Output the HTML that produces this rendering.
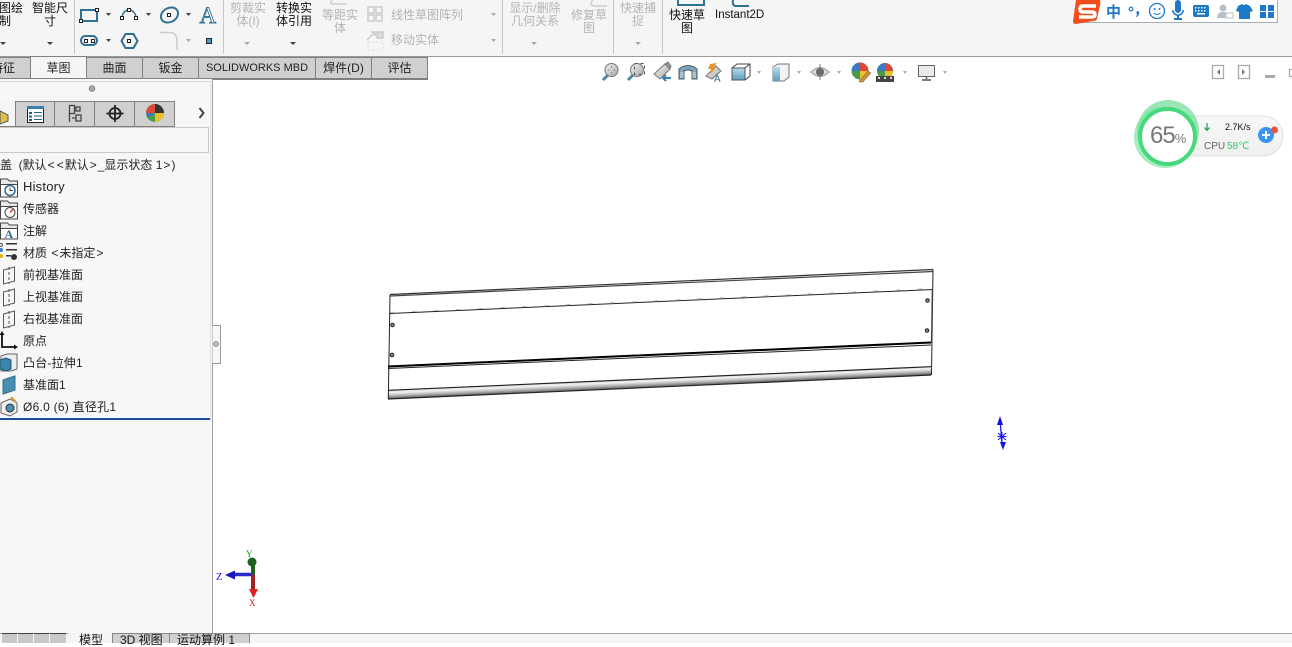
<!DOCTYPE html>
<html><head><meta charset="utf-8"><style>
html,body{margin:0;padding:0;width:1292px;height:643px;overflow:hidden;background:#fff;font-family:"Liberation Sans","Noto Sans CJK SC",sans-serif}
.t{position:absolute;white-space:nowrap;font-size:12px;line-height:13px;color:#111}
.c{text-align:center}
.g{color:#b4b4b4}
.b{position:absolute;background:#f5f5f5;box-sizing:border-box}
.tab{position:absolute;top:57px;height:21px;background:#d0d0d0;border:1px solid #808080;border-left:0;font-size:12px;line-height:21px;text-align:center;color:#222;white-space:nowrap;box-sizing:content-box}
.tr{position:absolute;left:23px;font-size:12px;line-height:16px;color:#222;white-space:nowrap}
.w{padding:0 1px}
svg{position:absolute;left:0;top:0}
</style></head><body>
<div class="b" style="left:0;top:0;width:1292px;height:56px"></div>
<div class="b" style="left:0;top:56px;width:1292px;height:1px;background:#9a9a9a"></div>

<div class="t c" style="left:-13px;top:2px;width:36px">草图绘<br>制</div>
<div class="t c" style="left:30px;top:2px;width:40px">智能尺<br>寸</div>
<div class="t c g" style="left:228px;top:2px;width:40px">剪裁实<br>体(I)</div>
<div class="t c" style="left:274px;top:2px;width:40px">转换实<br>体引用</div>
<div class="t c g" style="left:320px;top:9px;width:40px">等距实<br>体</div>
<div class="t g" style="left:391px;top:9px">线性草图阵列</div>
<div class="t g" style="left:391px;top:34px">移动实体</div>
<div class="t c g" style="left:506px;top:2px;width:58px">显示/删除<br>几何关系</div>
<div class="t c g" style="left:569px;top:9px;width:40px">修复草<br>图</div>
<div class="t c g" style="left:618px;top:2px;width:40px">快速捕<br>捉</div>
<div class="t c" style="left:667px;top:9px;width:40px">快速草<br>图</div>
<div class="t" style="left:715px;top:9px;font-size:11.5px">Instant2D</div>

<div class="tab" style="left:-24px;width:54px;border-left:0;background:#d0d0d0">特征</div>
<div class="tab" style="width:55px;background:#f5f5f5;border-left:1px solid #808080;left:30px;top:56px;height:22px;line-height:23px">草图</div>
<div class="tab" style="left:87px;width:55px">曲面</div>
<div class="tab" style="left:143px;width:55px">钣金</div>
<div class="tab" style="left:199px;width:116px;font-size:11px">SOLIDWORKS MBD</div>
<div class="tab" style="left:316px;width:55px">焊件(D)</div>
<div class="tab" style="left:372px;width:55px">评估</div>

<div class="b" style="left:0;top:79px;width:212px;height:554px;background:#f7f7f7"></div>
<div class="b" style="left:212px;top:79px;width:1px;height:554px;background:#a0a0a0"></div>
<div class="b" style="left:0;top:78px;width:428px;height:1px;background:#808080"></div>
<div class="b" style="left:0;top:81px;width:210px;height:1px;background:#d8d8d8"></div>
<div class="b" style="left:210px;top:81px;width:1px;height:340px;background:#e0e0e0"></div>
<div class="b" style="left:0;top:127px;width:209px;height:26px;background:#f7f7f7;border:1px solid #c8c8c8;border-left:0"></div>
<div class="b" style="left:0;top:101px;width:15px;height:26px;background:#f5f5f5;border-bottom:1px solid #808080"></div>
<div class="b" style="left:15px;top:101px;width:40px;height:26px;background:#d0d0d0;border:1px solid #808080"></div>
<div class="b" style="left:54px;top:101px;width:41px;height:26px;background:#d0d0d0;border:1px solid #808080"></div>
<div class="b" style="left:94px;top:101px;width:41px;height:26px;background:#d0d0d0;border:1px solid #808080"></div>
<div class="b" style="left:134px;top:101px;width:41px;height:26px;background:#d0d0d0;border:1px solid #808080"></div>
<div class="b" style="left:0;top:418px;width:210px;height:2px;background:#1a4f9c"></div>

<div class="tr" style="left:0;top:157px">盖&nbsp;&nbsp;(默认<span class="w">&lt;</span><span class="w">&lt;</span>默认<span class="w">&gt;</span>_显示状态 1<span class="w">&gt;</span>)</div>
<div class="tr" style="top:179px;font-size:13px;letter-spacing:.2px">History</div>
<div class="tr" style="top:201px">传感器</div>
<div class="tr" style="top:223px">注解</div>
<div class="tr" style="top:245px">材质 <span class="w">&lt;</span>未指定<span class="w">&gt;</span></div>
<div class="tr" style="top:267px">前视基准面</div>
<div class="tr" style="top:289px">上视基准面</div>
<div class="tr" style="top:311px">右视基准面</div>
<div class="tr" style="top:333px">原点</div>
<div class="tr" style="top:355px;letter-spacing:.2px">凸台-拉伸1</div>
<div class="tr" style="top:377px">基准面1</div>
<div class="tr" style="top:399px;letter-spacing:.25px">Ø6.0 (6) 直径孔1</div>

<svg width="1292" height="643" viewBox="0 0 1292 643">
<defs>
<linearGradient id="gr" gradientUnits="userSpaceOnUse" x1="660" y1="378" x2="660.4" y2="387"><stop offset="0" stop-color="#d0d0d0"/><stop offset=".3" stop-color="#f2f2f2"/><stop offset=".65" stop-color="#b0b0b0"/><stop offset="1" stop-color="#5a5a5a"/></linearGradient>
<linearGradient id="bl" x1="0" y1="0" x2="0" y2="1"><stop offset="0" stop-color="#b8dcec"/><stop offset="1" stop-color="#5c9dc0"/></linearGradient>
<linearGradient id="gy" x1="0" y1="0" x2="1" y2="1"><stop offset="0" stop-color="#f4f4f4"/><stop offset="1" stop-color="#a8a8a8"/></linearGradient>
<linearGradient id="pill" x1="0" y1="0" x2="0" y2="1"><stop offset="0" stop-color="#f8f8f8"/><stop offset="1" stop-color="#efefef"/></linearGradient>
</defs>
<g fill="none" stroke="#c8c8c8"><path d="M74.500 0V54M223.500 0V54M502.500 0V54M613.500 0V54M662.500 0V54"/></g>
<!-- ribbon arrows -->
<g fill="#444"><path d="M0 42h6l-3 3zM47 42h6l-3 3zM106 13h5l-2.500 3zM146 13h5l-2.500 3zM186 13h5l-2.500 3zM106 39h5l-2.500 3zM290 42h6l-3 3z"/></g>
<g fill="#aaa"><path d="M186 39h5l-2.500 3zM244 42h6l-3 3zM491 13h5l-2.500 3zM491 39h5l-2.500 3zM531 42h6l-3 3zM635 42h6l-3 3zM757 71h4l-2 3zM797 71h4l-2 3zM837 71h4l-2 3zM903 71h4l-2 3zM943 71h4l-2 3z"/></g>
<!-- sketch icons -->
<g fill="none" stroke="#2f7194" stroke-width="2">
<rect x="81" y="10" width="16" height="11"/><path d="M122 18a7 8 0 0 1 14 0" stroke-width="1.500"/>
<ellipse cx="169.500" cy="15" rx="9" ry="7" transform="rotate(-30 169.500 15)"/><rect x="81" y="36" width="16" height="9" rx="4.500"/><path d="M121.500 41l4-7h8l4 7-4 7h-8z"/>
</g>
<g fill="#fff" stroke="#222"><rect x="79.500" y="19.500" width="3" height="3"/><rect x="95.500" y="8.500" width="3" height="3"/><rect x="120.500" y="16.500" width="3" height="3"/><rect x="127.500" y="8.500" width="3" height="3"/><rect x="134.500" y="16.500" width="3" height="3"/><rect x="167.500" y="13.500" width="3" height="3"/><rect x="84.500" y="39.500" width="3" height="3"/><rect x="91.500" y="39.500" width="3" height="3"/><rect x="127.500" y="39.500" width="3" height="3"/></g>
<text x="199.500" y="23" font-family="Liberation Serif" font-size="23" fill="#fff" stroke="#2f7194" stroke-width=".9">A</text>
<rect x="206.500" y="38.500" width="5" height="5" fill="#4f97c0" stroke="#223"/>
<path d="M160 32.500h9q8 0 8 8V50" fill="none" stroke="#ccc" stroke-width="1.500"/>
<g fill="none" stroke="#ccc" stroke-width="1.500"><path d="M368 7h6v6h-6zM376 7h6v6h-6zM368 15h6v6h-6zM376 15h6v6h-6zM367 40l8-8M371 32h4v4"/><rect x="377" y="32" width="6" height="6" fill="#ddd"/><path d="M332 0q-3 4 1 4h14M593 0q-5 5 2 6h12"/></g>
<path d="M368 42h15v8h-15z" fill="none" stroke="#ddd" stroke-dasharray="2 2"/>
<path d="M678 0v5h26V0" fill="none" stroke="#2f7194" stroke-width="2"/><path d="M733 0q-1 6 3 6h13" fill="none" stroke="#2f7194" stroke-width="2"/>
<!-- heads-up -->
<g fill="none" stroke="#4d87a8" stroke-width="3"><path d="M603 80l5-5M628 80l5-5"/></g>
<g fill="url(#gy)" stroke="#777"><circle cx="611.500" cy="70" r="6.500"/><circle cx="637" cy="70" r="6.500"/></g>
<path d="M611.500 66v8M607.500 70h8" stroke="#888" stroke-dasharray="2 4"/>
<rect x="634.500" y="63.500" width="10" height="11" fill="none" stroke="#555" stroke-dasharray="3 3"/>
<path d="M654 74l11-10 5 5-10 10z" fill="url(#gy)" stroke="#777"/><path d="M665 64l3-2 3 4-1 3z" fill="#999" stroke="#777"/><path d="M671 78h-8m3-3l-3 3 3 3" fill="none" stroke="#3a7eb0" stroke-width="2"/>
<path d="M679 79v-10q9-7 18 0v10h-5v-8q-4-2-8 0v8z" fill="#7aa8c2" stroke="#555"/><path d="M681 72v6M683 72v6M693 72v6M695 72v6" stroke="#cfe2ec"/>
<path d="M706 76l10-10 5 5-9 8z" fill="url(#gy)" stroke="#777"/><path d="M710 64l7-1-4 5 3 0-6 6 1-5-3 0z" fill="#e8942a"/><text x="714" y="82" font-size="10" fill="#3a6f90" font-family="Liberation Sans">A</text>
<path d="M732 68h13v12h-13z" fill="url(#bl)" stroke="#555"/><path d="M732 68l5-4h13v12l-5 4M745 68l5-4" fill="none" stroke="#444"/>
<path d="M773 67l5-3h11v13l-5 4h-11z" fill="#f0f2f4" stroke="#777"/><path d="M773 67h7v14h-7z" fill="url(#bl)"/>
<path d="M811 72q9-9 18 0q-9 9-18 0z" fill="#ddd" stroke="#999"/><circle cx="820" cy="72" r="4" fill="#666"/><path d="M820 64v16" stroke="#777"/>
<circle cx="860" cy="71" r="8.500" fill="#4a9a4a"/><path d="M860 62.500a8.500 8.500 0 0 1 8.500 8.500h-8.500z" fill="#d94a3a"/><path d="M851.500 71a8.500 8.500 0 0 1 8.500-8.500v8.500z" fill="#3a7ac0"/><path d="M860 71h8.500a8.500 8.500 0 0 1-8.500 8.500z" fill="#e8c030"/><path d="M860 80l8-9 3 2-8 9-4 0z" fill="#d09030" stroke="#555" stroke-width=".5"/>
<circle cx="885" cy="71" r="8" fill="#4a9a4a"/><path d="M885 63a8 8 0 0 1 8 8h-8z" fill="#d94a3a"/><path d="M877 71a8 8 0 0 1 8-8v8z" fill="#3a7ac0"/><path d="M885 71h8a8 8 0 0 1-8 8z" fill="#e8c030"/><rect x="876" y="76" width="18" height="6" fill="#444"/><path d="M878 77h2v2h-2zM884 77h2v2h-2zM890 77h2v2h-2z" fill="#ddd"/>
<rect x="918.500" y="65.500" width="16" height="11" fill="#eaeaea" stroke="#666"/><path d="M926.500 77v2M922 80h9" stroke="#555" stroke-width="1.500"/>
<!-- window ctrl -->
<g fill="none" stroke="#aaa" stroke-width="1.300"><rect x="1212.500" y="65.500" width="11" height="13"/><rect x="1238.500" y="65.500" width="11" height="13"/><rect x="1289.500" y="69.500" width="6" height="7"/></g>
<path d="M1220 69v6l-3-3zM1242 69v6l3-3z" fill="#777"/><rect x="1265" y="75" width="10" height="3" fill="#aaa"/>
<!-- panel icons -->
<circle cx="92" cy="88.500" r="2.800" fill="#aaa" stroke="#888"/>
<path d="M0 111l8 4v6l-8 3z" fill="#e0c050" stroke="#555"/>
<rect x="27.500" y="106.500" width="16" height="16" fill="#fff" stroke="#222"/><rect x="27" y="106" width="17" height="3" fill="#3a7eb0"/><path d="M29 112h3v2h-3zM29 115.500h3v2h-3zM29 119h3v2h-3zM34 112h8v1h-8zM34 115.500h8v1h-8zM34 119h8v1h-8z" fill="#1f5f8b"/>
<g fill="none" stroke="#444" stroke-width="1.300"><rect x="69.500" y="105.500" width="5" height="8"/><path d="M69.500 113v9M72 118h4M75 109h3"/><rect x="76" y="115" width="5" height="6" fill="#ccc"/><rect x="76" y="107" width="4" height="4" fill="#ccc"/></g>
<circle cx="115" cy="113.500" r="5.500" fill="none" stroke="#222" stroke-width="1.800"/><path d="M115 105v17M106.500 113.500h17" stroke="#222" stroke-width="1.800"/>
<circle cx="155" cy="113" r="9" fill="#4aa04a"/><path d="M155 104a9 9 0 0 1 9 9h-9z" fill="#333"/><path d="M146 113a9 9 0 0 1 9-9v9z" fill="#d94a3a"/><path d="M155 113h9a9 9 0 0 1-9 9z" fill="#e8c030"/><path d="M146 113l9 0-7 5z" fill="#3a7ac0"/>
<path d="M199.500 108l4 5-4 5" fill="none" stroke="#444" stroke-width="2"/>
<!-- tree icons -->
<g fill="#e8e8e8" stroke="#444"><path d="M.5 179h7l2 2h8v16H.5z"/><path d="M.5 201h7l2 2h8v16H.5z"/><path d="M.5 223h7l2 2h8v14H.5z"/></g>
<g fill="#fff" stroke="#444"><rect x=".5" y="184.500" width="17" height="12.500"/><rect x=".5" y="206.500" width="17" height="12.500"/><rect x=".5" y="228.500" width="17" height="10.500"/></g>
<circle cx="10" cy="190.500" r="5" fill="#fff" stroke="#2c6a96" stroke-width="1.500"/><path d="M10 187.500v3h3" fill="none" stroke="#444"/><circle cx="10" cy="212.500" r="5" fill="#fff" stroke="#444"/><path d="M10 212.500l3-3" stroke="#d33" stroke-width="1.500"/><text x="4.500" y="238" font-family="Liberation Serif" font-weight="bold" font-size="12" fill="#2d6d92">A</text>
<g fill="#333"><rect x="6" y="243" width="11" height="1.500"/><rect x="6" y="249" width="11" height="1.500"/><rect x="6" y="255" width="5" height="1.500"/><circle cx="14" cy="257" r="3"/></g><circle cx="1" cy="245" r="1.500" fill="#fff" stroke="#555"/><circle cx="1" cy="250" r="2" fill="#3a7ac0"/><circle cx="1" cy="256" r="2" fill="#e0b020"/>
<g fill="none" stroke="#555"><path d="M3.500 270l11-3v14l-11 3z"/><path d="M3.500 292l11-3v14l-11 3z"/><path d="M3.500 314l11-3v14l-11 3z"/><path d="M9 267v17M9 289v17M9 311v17" stroke-dasharray="3 2"/></g>
<path d="M2 334v13h14" fill="none" stroke="#111" stroke-width="1.800"/><path d="M2 331l2.500 4h-5zM18 347l-4-2.500v5z" fill="#111"/>
<path d="M1 356l6-2h10v15l-6 2h-10z" fill="#eee" stroke="#666"/><path d="M0 360l6-2 5 2v9l-5 2-6-2z" fill="#3a85ad" stroke="#245a78"/>
<path d="M3 380l12-4v14l-12 4z" fill="#4a8fb2" stroke="#2f6d8c"/>
<path d="M1 403l9-4 7 4v9l-7 4-9-3z" fill="#eee" stroke="#666"/><circle cx="10" cy="408" r="4" fill="#4a8fb2" stroke="#333"/><path d="M11 397l5 5" stroke="#e0a030" stroke-width="2"/>
<!-- panel splitter -->
<path d="M212.500 325.500h8v38h-8" fill="#f7f7f7" stroke="#999"/><circle cx="216" cy="344" r="2.500" fill="#bbb" stroke="#999"/>
<!-- model -->
<path d="M388 390L931 366.700V375L388 399z" fill="url(#gr)"/>
<g fill="none" stroke="#222" stroke-width="1">
<path d="M390 294.500L933 269.500" stroke="#333" stroke-width="1.200"/><path d="M390 296L933 271.500" stroke="#444" stroke-width="1.200"/>
<path d="M390 313.500L933 289.500"/>
<path d="M390 312.500L933 288.500" stroke="#bbb" stroke-dasharray="5 17"/>
<path d="M390 295L388.300 399M933 269.500L931.500 375"/>
<path d="M388 368.500L931 345" stroke-width="1"/>
<path d="M388 390.300L931 366.700" stroke-width="1.200"/><path d="M388 399L931 375" stroke-width="1.200"/>
</g>
<path d="M932.300 289L931.500 343" stroke="#444" stroke-width="1.200"/>
<path d="M388 366.500L931 342.500" stroke="#000" stroke-width="2"/>
<g fill="#888" stroke="#222"><circle cx="392.500" cy="325" r="1.800"/><circle cx="392" cy="355" r="1.800"/><circle cx="927.500" cy="300.500" r="1.800"/><circle cx="927" cy="330.500" r="1.800"/></g>
<!-- blue marker -->
<path d="M1000 420l2 24" stroke="#1a1aee" stroke-width="1.300"/><path d="M1000 416l3 9h-6zM1003 450l-3-8h6z" fill="#1212ee"/>
<path d="M998 433l8 7M1006 433l-8 7M997.500 436.500h9M1002 432v9" stroke="#1212ee"/>
<!-- triad -->
<path d="M252 574.500H232" stroke="#2a2ad0" stroke-width="3.500"/><path d="M225 575l10-4.500v9z" fill="#1818b8"/>
<path d="M253 575v15" stroke="#a52020" stroke-width="4"/><path d="M249 589h9l-4.500 9z" fill="#e02020"/>
<path d="M253 575v-13" stroke="#1f5f1f" stroke-width="4"/><circle cx="252" cy="562" r="4.500" fill="#1f601f"/>
<text x="216" y="580" font-family="Liberation Serif" font-size="10.500" fill="#1515d0">Z</text>
<text x="246" y="557" font-family="Liberation Serif" font-size="9" fill="#109010">Y</text>
<text x="249" y="606" font-family="Liberation Serif" font-size="9" fill="#e01010">X</text>
<!-- sogou -->
<rect x="1083.500" y="-2" width="194" height="24.500" fill="#fff" stroke="#a8adb8"/>
<path d="M1076 0h24q1 2 0 5l-3 14q-1 2-4 2l-17 3q-3 0-3-3z" fill="#f04e1e"/>
<path d="M1096 6h-13q-3 0-3 3t3 3h9q3 0 3 2.500t-3 2.500h-13" fill="none" stroke="#fff" stroke-width="3.500"/>
<g fill="#1e78c8">
<text x="1106" y="17" font-size="15" font-weight="bold" font-family="Noto Sans CJK SC">中</text>
<circle cx="1131" cy="9" r="1.800" fill="none" stroke="#1e78c8" stroke-width="1.200"/><path d="M1137 11q3 0 2 3t-3 3l1-2q-1-3 0-4z"/>
<path d="M1175 3a3 3 0 0 1 6 0v7a3 3 0 0 1-6 0zM1172 10h1.500a4.500 4.500 0 0 0 9 0h1.500a6 6 0 0 1-5 6v2h3v2h-8v-2h3v-2a6 6 0 0 1-5-6z"/>
<rect x="1193" y="5" width="16" height="12" rx="2"/>
<path d="M1238 6l4-2q2 2 4 0l4 2 3 5-3 1v7h-11v-7l-3-1z"/>
<rect x="1260" y="5" width="6" height="6"/><rect x="1268" y="5" width="6" height="6"/><rect x="1260" y="12" width="6" height="6"/><rect x="1268" y="12" width="6" height="6"/>
</g>
<circle cx="1157" cy="11" r="7.500" fill="none" stroke="#1e78c8" stroke-width="1.300"/><circle cx="1154.500" cy="9" r="1" fill="#1e78c8"/><circle cx="1159.500" cy="9" r="1" fill="#1e78c8"/><path d="M1153.500 13q3.500 3 7 0" fill="none" stroke="#1e78c8"/>
<g fill="#fff"><path d="M1195 7h1.500v1.500h-1.500zM1198 7h1.500v1.500h-1.500zM1201 7h1.500v1.500h-1.500zM1204 7h1.500v1.500h-1.500zM1195 10h1.500v1.500h-1.500zM1198 10h1.500v1.500h-1.500zM1201 10h1.500v1.500h-1.500zM1204 10h1.500v1.500h-1.500z"/><rect x="1197" y="13" width="8" height="1.500"/></g>
<circle cx="1223" cy="8" r="3.500" fill="#b8c0c8"/><path d="M1217 18q0-6 6-6t5 3v3z" fill="#b8c0c8"/><rect x="1226" y="13" width="7" height="5" fill="#fff" stroke="#b8c0c8"/>
<!-- widget -->
<rect x="1165" y="116" width="118" height="40" rx="20" fill="url(#pill)" stroke="#e0e0e0"/>
<circle cx="1168" cy="131" r="31" fill="#70dc98" opacity=".7"/><circle cx="1165" cy="137" r="31" fill="#80e4a4" opacity=".7"/>
<circle cx="1167.500" cy="136.500" r="27.500" fill="#fff" stroke="#48d87c" stroke-width="4"/>
<text x="1150" y="143" font-size="24" fill="#777" font-family="Liberation Sans" style="letter-spacing:-1px">65<tspan font-size="13">%</tspan></text>
<path d="M1207 123v7M1204.500 127.500l2.500 3 2.500-3" fill="none" stroke="#18a050" stroke-width="1.200"/>
<text x="1225" y="130" font-size="9" fill="#111" font-family="Liberation Sans">2.7K/s</text>
<text x="1204" y="149" font-size="10" fill="#666" font-family="Liberation Sans">CPU</text>
<text x="1227" y="149" font-size="10" fill="#2fd070" font-family="Liberation Sans">58℃</text>
<circle cx="1266" cy="135" r="8" fill="#3a94f0"/><path d="M1262 135h8M1266 131v8" stroke="#fff" stroke-width="2"/><circle cx="1274.500" cy="130" r="3.500" fill="#f0503a"/>
</svg>

<div class="b" style="left:0;top:633px;width:1292px;height:10px;background:#f5f5f5"></div>
<div class="b" style="left:0;top:633px;width:1292px;height:1px;background:#a0a0a0"></div>
<div class="b" style="left:2px;top:633px;width:15px;height:10px;background:#c8c8c8;border-top:1px solid #444"></div>
<div class="b" style="left:18px;top:633px;width:15px;height:10px;background:#c8c8c8;border-top:1px solid #444"></div>
<div class="b" style="left:34px;top:633px;width:15px;height:10px;background:#c8c8c8;border-top:1px solid #444"></div>
<div class="b" style="left:50px;top:633px;width:16px;height:10px;background:#c8c8c8;border-top:1px solid #444"></div>
<div class="b" style="left:68px;top:633px;width:44px;height:10px;background:#f5f5f5"></div>
<div class="b" style="left:112px;top:633px;width:58px;height:10px;background:#d0d0d0;border:1px solid #888;border-bottom:0"></div>
<div class="b" style="left:169px;top:633px;width:81px;height:10px;background:#d0d0d0;border:1px solid #888;border-bottom:0"></div>
<div class="t" style="left:79px;top:634px;color:#111">模型</div>
<div class="t" style="left:120px;top:634px;color:#111">3D 视图</div>
<div class="t" style="left:177px;top:634px;color:#111">运动算例 1</div>
</body></html>
